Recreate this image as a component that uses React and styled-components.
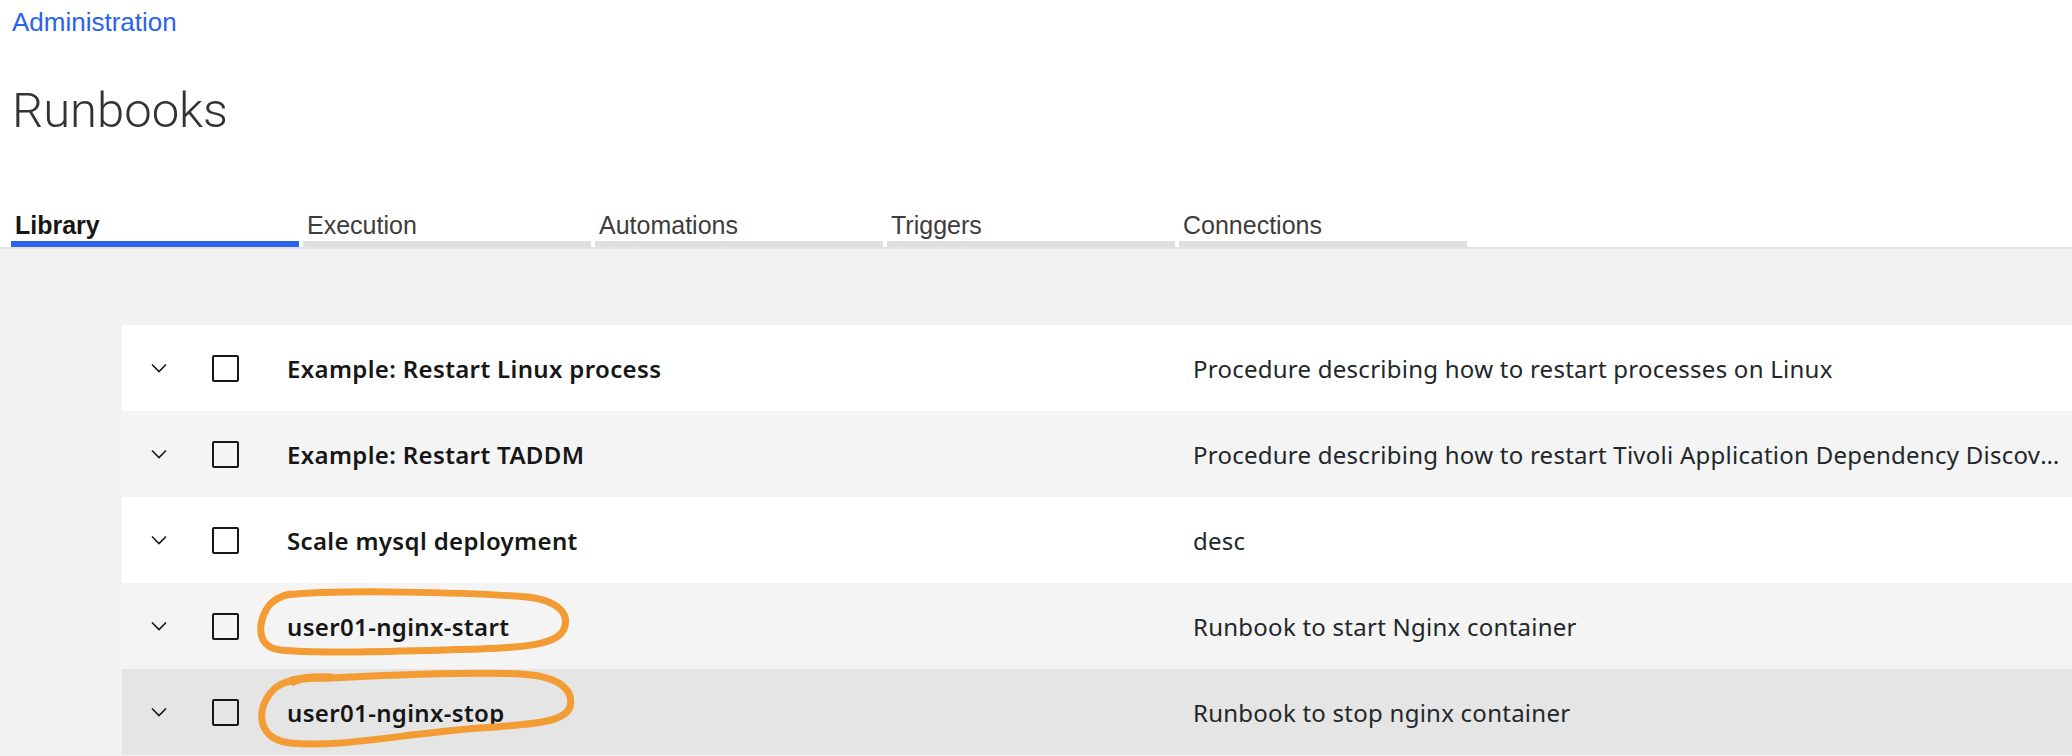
import React from "react";
import styled, { createGlobalStyle } from "styled-components";

const GlobalStyle = createGlobalStyle`
  body {
    margin: 0;
    background: #ffffff;
    font-family: "Liberation Sans", Arial, sans-serif;
  }
`;

const tabs = ["Library", "Execution", "Automations", "Triggers", "Connections"];

const runbooks = [
  {
    name: "Example: Restart Linux process",
    desc: "Procedure describing how to restart processes on Linux",
    bg: "#ffffff",
  },
  {
    name: "Example: Restart TADDM",
    desc: "Procedure describing how to restart Tivoli Application Dependency Discovery Manager",
    bg: "#f4f4f4",
  },
  { name: "Scale mysql deployment", desc: "desc", bg: "#ffffff" },
  {
    name: "user01-nginx-start",
    desc: "Runbook to start Nginx container",
    bg: "#f4f4f4",
    mark: "start",
  },
  {
    name: "user01-nginx-stop",
    desc: "Runbook to stop nginx container",
    bg: "#e5e5e5",
    mark: "stop",
  },
];

// hand drawn orange circles from the annotation
function Scribble({ kind }) {
  if (kind === "start") {
    return (
      <Mark viewBox="250 584 335 86" width="335" height="86">
        <path d="M 286 596 C 340 590, 470 594, 515 597 C 558 599, 570 614, 564 630 C 557 645, 530 648, 480 650 C 400 652, 320 655, 280 651 C 263 649, 258 636, 262 621 C 266 607, 273 599, 290 595" />
      </Mark>
    );
  }
  return (
    <Mark viewBox="250 670 335 86" width="335" height="86">
      <path d="M 293 683 C 305 677, 318 680, 330 679 C 400 675, 480 673, 520 675 C 560 677, 574 691, 570 708 C 565 722, 540 725, 480 729 C 400 735, 340 749, 290 744 C 263 741, 258 721, 264 705 C 270 690, 280 683, 296 681" />
      <path d="M 292 681 C 300 679, 315 677, 331 678" />
    </Mark>
  );
}

function Chevron() {
  return (
    <svg width="16" height="10" viewBox="0 0 16 10">
      <polyline points="1,1.5 8,8.5 15,1.5" fill="none" stroke="#161616" strokeWidth="1.6" />
    </svg>
  );
}

export default function App() {
  return (
    <>
      <GlobalStyle />
      <Page>
        <Header>
          <Crumb href="#">Administration</Crumb>
          <Title>Runbooks</Title>
        </Header>
        <TabBar>
          {tabs.map((t, i) => (
            <Tab key={t} $active={i === 0}>
              {t}
            </Tab>
          ))}
        </TabBar>
        <Main>
          {runbooks.map((r) => (
            <Row key={r.name} $bg={r.bg}>
              <ExpandCell>
                <Chevron />
              </ExpandCell>
              <CheckCell>
                <Box />
              </CheckCell>
              <NameCell>
                {r.name}
                {r.mark && <Scribble kind={r.mark} />}
              </NameCell>
              <DescCell>{r.desc}</DescCell>
            </Row>
          ))}
        </Main>
      </Page>
    </>
  );
}

const Page = styled.div`
  width: 2072px;
  height: 756px;
  overflow: hidden;
  display: flex;
  flex-direction: column;
`;

const Header = styled.div`
  padding: 6px 12px 0;
  display: flex;
  flex-direction: column;
  align-items: flex-start;
`;

const Crumb = styled.a`
  font-size: 26px;
  line-height: 32px;
  color: #2a62f0;
  text-decoration: none;
`;

const Title = styled.h1`
  margin: 45px 0 0;
  font-family: "Roboto", "Liberation Sans", sans-serif;
  font-weight: 300;
  font-size: 49px;
  line-height: 56px;
  color: #333333;
`;

const TabBar = styled.div`
  margin-top: 71px;
  padding-left: 11px;
  display: flex;
  gap: 4px;
  border-bottom: 2px solid #e0e3e6;
`;

const Tab = styled.div`
  width: 288px;
  box-sizing: border-box;
  padding: 0 4px 1px;
  font-size: 25px;
  line-height: 30px;
  font-weight: ${(p) => (p.$active ? 700 : 400)};
  color: ${(p) => (p.$active ? "#161616" : "#3d3d3d")};
  border-bottom: 6px solid ${(p) => (p.$active ? "#2a62f0" : "#e0e0e0")};
`;

const Main = styled.div`
  flex: 1;
  background: #f2f2f2;
  padding: 76px 0 0 122px;
`;

const Row = styled.div`
  height: 86px;
  display: grid;
  grid-template-columns: 74px 91px 906px minmax(0, 1fr);
  align-items: center;
  background: ${(p) => p.$bg};
  font-family: "Noto Sans", "Open Sans", sans-serif;
  font-size: 24px;
`;

const ExpandCell = styled.div`
  display: flex;
  justify-content: center;
`;

const CheckCell = styled.div`
  padding-left: 16px;
  display: flex;
`;

const Box = styled.div`
  width: 27px;
  height: 27px;
  box-sizing: border-box;
  border: 2px solid #161616;
  border-radius: 2px;
`;

const NameCell = styled.div`
  position: relative;
  align-self: stretch;
  display: flex;
  align-items: center;
  font-weight: 600;
  letter-spacing: 0.35px;
  color: #161616;
  white-space: nowrap;
`;

const Mark = styled.svg`
  position: absolute;
  left: -37px;
  top: 0;
  overflow: visible;
  pointer-events: none;

  path {
    fill: none;
    stroke: #f39c33;
    stroke-width: 7;
    stroke-linecap: round;
    stroke-linejoin: round;
  }
`;

const DescCell = styled.div`
  padding-right: 8px;
  letter-spacing: 0.25px;
  color: #21272a;
  white-space: nowrap;
  overflow: hidden;
  text-overflow: ellipsis;
`;
